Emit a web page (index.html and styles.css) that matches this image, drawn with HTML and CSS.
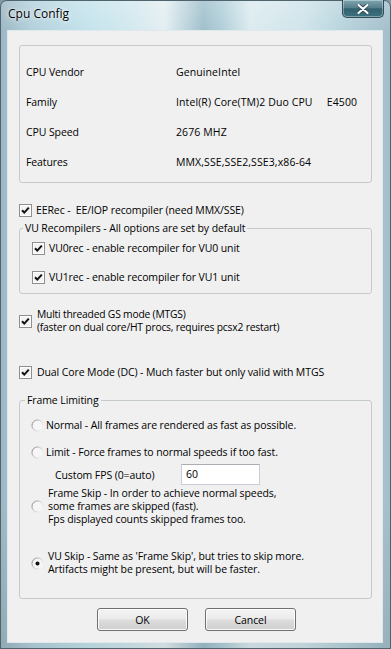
FILE: index.html
```html
<!DOCTYPE html>
<html lang="en">
<head>
<meta charset="utf-8">
<title>Cpu Config</title>
<link rel="stylesheet" href="styles.css">
</head>
<body>
<div class="window">
  <div class="titlebar">
    <span class="title">Cpu Config</span>
    <div class="close">
      <svg width="12" height="10" viewBox="0 0 12 10"><path d="M1.5 1 L10.5 9 M10.5 1 L1.5 9" stroke="#2a4650" stroke-width="3.6" stroke-linecap="round"/><path d="M1.5 1 L10.5 9 M10.5 1 L1.5 9" stroke="#fff" stroke-width="2.2" stroke-linecap="round"/></svg>
    </div>
  </div>
  <div class="client">
    <div class="group info">
      <div class="info-grid">
        <span class="lbl">CPU Vendor</span><span class="val">GenuineIntel</span>
        <span class="lbl">Family</span><span class="val">Intel(R) Core(TM)2 Duo CPU     E4500</span>
        <span class="lbl">CPU Speed</span><span class="val">2676 MHZ</span>
        <span class="lbl">Features</span><span class="val">MMX,SSE,SSE2,SSE3,x86-64</span>
      </div>
    </div>

    <label class="check eerec">
      <svg class="cb" width="13" height="13" viewBox="0 0 13 13"><rect x="0.5" y="0.5" width="12" height="12" fill="#fff" stroke="#8e8f8f"/><rect x="2" y="2" width="9" height="9" fill="#f3f3f3"/><path d="M3 6.2 L5.3 8.6 L9.8 3.6" fill="none" stroke="#111" stroke-width="2"/></svg>
      <span class="txt">EERec -  EE/IOP recompiler (need MMX/SSE)</span>
    </label>

    <fieldset class="group vu">
      <legend>VU Recompilers - All options are set by default</legend>
      <label class="check sub">
        <svg class="cb" width="13" height="13" viewBox="0 0 13 13"><rect x="0.5" y="0.5" width="12" height="12" fill="#fff" stroke="#8e8f8f"/><rect x="2" y="2" width="9" height="9" fill="#f3f3f3"/><path d="M3 6.2 L5.3 8.6 L9.8 3.6" fill="none" stroke="#111" stroke-width="2"/></svg>
        <span class="txt">VU0rec - enable recompiler for VU0 unit</span>
      </label>
      <label class="check sub second">
        <svg class="cb" width="13" height="13" viewBox="0 0 13 13"><rect x="0.5" y="0.5" width="12" height="12" fill="#fff" stroke="#8e8f8f"/><rect x="2" y="2" width="9" height="9" fill="#f3f3f3"/><path d="M3 6.2 L5.3 8.6 L9.8 3.6" fill="none" stroke="#111" stroke-width="2"/></svg>
        <span class="txt">VU1rec - enable recompiler for VU1 unit</span>
      </label>
    </fieldset>

    <label class="check mtgs">
      <svg class="cb" width="13" height="13" viewBox="0 0 13 13"><rect x="0.5" y="0.5" width="12" height="12" fill="#fff" stroke="#8e8f8f"/><rect x="2" y="2" width="9" height="9" fill="#f3f3f3"/><path d="M3 6.2 L5.3 8.6 L9.8 3.6" fill="none" stroke="#111" stroke-width="2"/></svg>
      <span class="txt multi tight">Multi threaded GS mode (MTGS)<br>(faster on dual core/HT procs, requires pcsx2 restart)</span>
    </label>

    <label class="check dual">
      <svg class="cb" width="13" height="13" viewBox="0 0 13 13"><rect x="0.5" y="0.5" width="12" height="12" fill="#fff" stroke="#8e8f8f"/><rect x="2" y="2" width="9" height="9" fill="#f3f3f3"/><path d="M3 6.2 L5.3 8.6 L9.8 3.6" fill="none" stroke="#111" stroke-width="2"/></svg>
      <span class="txt">Dual Core Mode (DC) - Much faster but only valid with MTGS</span>
    </label>

    <fieldset class="group frame">
      <legend>Frame Limiting</legend>
      <label class="radio r-normal">
        <svg class="rb" width="13" height="13" viewBox="0 0 13 13"><defs><linearGradient id="g1" x1="0" y1="0" x2="1" y2="0.6"><stop offset="0" stop-color="#6e6e6e"/><stop offset="0.45" stop-color="#b9b9b9"/><stop offset="1" stop-color="#f2f2f2"/></linearGradient></defs><circle cx="6.5" cy="6.5" r="5.5" fill="#f6f6f6" stroke="url(#g1)"/></svg>
        <span class="txt">Normal - All frames are rendered as fast as possible.</span>
      </label>
      <label class="radio r-limit">
        <svg class="rb" width="13" height="13" viewBox="0 0 13 13"><defs><linearGradient id="g2" x1="0" y1="0" x2="1" y2="0.6"><stop offset="0" stop-color="#6e6e6e"/><stop offset="0.45" stop-color="#b9b9b9"/><stop offset="1" stop-color="#f2f2f2"/></linearGradient></defs><circle cx="6.5" cy="6.5" r="5.5" fill="#f6f6f6" stroke="url(#g2)"/></svg>
        <span class="txt">Limit - Force frames to normal speeds if too fast.</span>
      </label>
      <div class="fps-row">
        <span class="fps-label">Custom FPS (0=auto)</span>
        <div class="fps-input">60</div>
      </div>
      <label class="radio multi-row r-skip">
        <svg class="rb" width="13" height="13" viewBox="0 0 13 13"><defs><linearGradient id="g3" x1="0" y1="0" x2="1" y2="0.6"><stop offset="0" stop-color="#6e6e6e"/><stop offset="0.45" stop-color="#b9b9b9"/><stop offset="1" stop-color="#f2f2f2"/></linearGradient></defs><circle cx="6.5" cy="6.5" r="5.5" fill="#f6f6f6" stroke="url(#g3)"/></svg>
        <span class="txt multi">Frame Skip - In order to achieve normal speeds,<br>some frames are skipped (fast).<br>Fps displayed counts skipped frames too.</span>
      </label>
      <label class="radio multi-row r-vuskip">
        <svg class="rb" width="13" height="13" viewBox="0 0 13 13"><defs><linearGradient id="g4" x1="0" y1="0" x2="1" y2="0.6"><stop offset="0" stop-color="#6e6e6e"/><stop offset="0.45" stop-color="#b9b9b9"/><stop offset="1" stop-color="#f2f2f2"/></linearGradient></defs><circle cx="6.5" cy="6.5" r="5.5" fill="#f6f6f6" stroke="url(#g4)"/><circle cx="6.5" cy="6.5" r="2" fill="#111"/></svg>
        <span class="txt multi">VU Skip - Same as 'Frame Skip', but tries to skip more.<br>Artifacts might be present, but will be faster.</span>
      </label>
    </fieldset>

    <div class="buttons">
      <div class="btn">OK</div>
      <div class="btn">Cancel</div>
    </div>
  </div>
</div>
</body>
</html>
```

FILE: styles.css
```css
* { box-sizing: border-box; }
html, body { margin: 0; padding: 0; }
body {
  width: 391px;
  height: 649px;
  overflow: hidden;
  background: #7f98a3;
  font-family: "Open Sans", "Noto Sans", sans-serif;
  font-size: 10.5px;
  letter-spacing: -0.1px;
  color: #000;
}

.window {
  width: 391px;
  height: 649px;
  display: flex;
  flex-direction: column;
  border: 1px solid #50646d;
  border-radius: 7px 7px 0 0;
  padding: 0 8px 6px 7px;
  background:
    linear-gradient(180deg, rgba(255,255,255,0.18) 0px, rgba(255,255,255,0) 30px, rgba(0,0,0,0) 500px, rgba(0,0,0,0.08) 100%),
    linear-gradient(90deg, #9db8c4 0%, #b3d1dc 8%, #c4e3ec 22%, #d3e9ef 34%, #e4eff2 42%, #9fc0cc 52%, #b2d0da 57%, #dcebef 64%, #cfe4ea 78%, #bcd7e0 86%, #a3bfcb 100%);
}

.titlebar {
  height: 30px;
  display: flex;
  justify-content: space-between;
  align-items: flex-start;
}
.title {
  font-size: 12px;
  letter-spacing: 0;
  line-height: 16px;
  padding-top: 5px;
  color: #000;
  text-shadow: 0 0 6px rgba(255,255,255,0.9), 0 0 2px rgba(255,255,255,0.9);
}
.close {
  width: 42px;
  height: 18px;
  margin-top: -1px;
  margin-right: -2px;
  border: 1px solid #2f4b55;
  border-top: none;
  border-radius: 0 0 5px 5px;
  background: linear-gradient(180deg, #7fa7b2 0%, #557f8b 45%, #33616e 52%, #3c7180 100%);
  box-shadow: inset 0 0 0 1px rgba(255,255,255,0.35);
  display: flex;
  align-items: center;
  justify-content: center;
}

.client {
  flex: 1;
  background: #f0f0f0;
  outline: 1px solid #dfe9ed;
  padding-left: 11px;
}

.group {
  width: 353px;
  border: 1px solid #c5cacd;
  border-radius: 3px;
  margin: 0;
  min-width: 0;
}

.info {
  margin-top: 14px;
  padding: 19px 0 13px 6px;
}
.info-grid {
  display: grid;
  grid-template-columns: 150px 1fr;
  row-gap: 16px;
  line-height: 14px;
}
.val { white-space: pre; letter-spacing: 0.1px; }

.check, .radio {
  display: flex;
  align-items: center;
  line-height: 14px;
  white-space: pre;
}
.cb, .rb { flex: none; display: block; }
.check .txt { margin-left: 5px; }
.check.eerec { margin-top: 20px; }
.check.eerec .txt { margin-left: 4px; }

legend {
  line-height: 14px;
  padding: 0 2px;
}

.vu {
  margin-top: 4px;
  padding: 6px 0 9px 12px;
}
.vu legend { margin-left: -9px; }
.check.sub .txt { margin-left: 4px; }
.check.sub.second { margin-top: 15px; }

.multi { line-height: 13px; }
.tight { font-size: 10.3px; letter-spacing: -0.2px; }
.check.mtgs { margin-top: 14px; }
.check.dual { margin-top: 31px; }

.frame {
  margin-top: 14px;
  padding: 11px 0 22px 11px;
}
.frame legend { margin-left: -6px; }
.radio .txt { margin-left: 2px; }
.radio.multi-row .txt { margin-left: 4px; }
.r-limit { margin-top: 13px; }
.fps-row {
  margin-top: 5px;
  display: flex;
  align-items: center;
  height: 21px;
}
.fps-label {
  width: 126px;
  margin-left: 24px;
}
.fps-input {
  width: 79px;
  height: 21px;
  background: #fff;
  border: 1px solid #c9ced6;
  border-top-color: #abadb3;
  padding-left: 4px;
  line-height: 19px;
}
.r-skip { margin-top: 2px; }
.r-vuskip { margin-top: 24px; }

.buttons {
  display: flex;
  gap: 17px;
  margin-top: 9px;
  margin-left: 78px;
}
.btn {
  width: 91px;
  height: 23px;
  border: 1px solid #707070;
  border-radius: 3px;
  background: linear-gradient(180deg, #f4f4f4 0%, #ebebeb 48%, #dddddd 52%, #cfcfcf 100%);
  box-shadow: inset 0 0 0 1px rgba(255,255,255,0.85);
  display: flex;
  align-items: center;
  justify-content: center;
  line-height: 14px;
}
```
